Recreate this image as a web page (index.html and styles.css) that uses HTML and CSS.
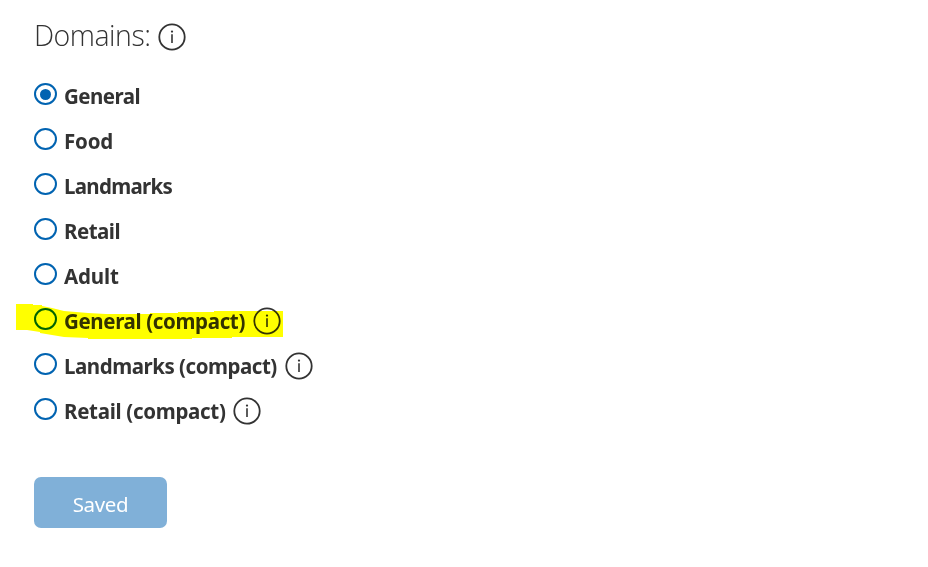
FILE: index.html
```
<!DOCTYPE html>
<html lang="en">
<head>
<meta charset="utf-8">
<title>Domains</title>
<link rel="stylesheet" href="styles.css">
</head>
<body>
<svg width="0" height="0" class="defs"><defs>
<symbol id="info" viewBox="0 0 28 28"><circle cx="14" cy="14" r="12.7" fill="none" stroke="#333" stroke-width="1.8"/><path d="M14 11.3V20" stroke="#333" stroke-width="1.6"/><circle cx="14" cy="8.6" r="1.15" fill="#333"/></symbol>
</defs></svg>
<main class="settings">
<h1 class="heading"><span class="title">Domains:</span><svg class="info"><use href="#info"/></svg></h1>
<div class="options">
<div class="option"><span class="radio checked"></span><span class="label general">General</span></div>
<div class="option"><span class="radio"></span><span class="label food">Food</span></div>
<div class="option"><span class="radio"></span><span class="label landmarks">Landmarks</span></div>
<div class="option"><span class="radio"></span><span class="label retail">Retail</span></div>
<div class="option"><span class="radio"></span><span class="label adult">Adult</span></div>
<div class="option"><span class="radio"></span><span class="label general-compact">General (compact)</span><svg class="info"><use href="#info"/></svg>
<svg class="marker" viewBox="0 0 268 36"><path d="M0 0H17V1H26V2L36 4L48 7L72 9L90 10H134V9H162V8H198V7H267V33H216V34H176V35H72V34L48 33L36 31L24 29V28L11 26H0Z" fill="#ff0"/></svg></div>
<div class="option"><span class="radio"></span><span class="label landmarks-compact">Landmarks (compact)</span><svg class="info"><use href="#info"/></svg></div>
<div class="option"><span class="radio"></span><span class="label retail-compact">Retail (compact)</span><svg class="info"><use href="#info"/></svg></div>
</div>
<button class="save">Saved</button>
</main>
</body>
</html>
```
FILE: styles.css
```
* { box-sizing: border-box; }
body { margin: 0; background: #fff; color: #333; font-family: "Noto Sans", "Open Sans", sans-serif; }
.defs { position: absolute; }
.settings { padding: 15px 34px 0; }
.heading { display: flex; align-items: center; height: 44px; margin: 0; font-weight: 300; font-size: 28.5px; line-height: 44px; }
.title { width: 124px; margin-top: -4px; font-family: "Open Sans", sans-serif; font-weight: 300; white-space: nowrap; letter-spacing: -0.5px; }
.info { display: block; width: 28px; height: 28px; flex: none; }
.option .info { margin-top: -1px; }
.options { padding-top: 15px; }
.option { position: relative; display: flex; align-items: center; height: 45px; }
.radio { display: flex; flex: none; align-items: center; justify-content: center; width: 23px; height: 22px; margin: -5px 7px 0 0; border: 2px solid #0063b1; border-radius: 50%; }
.checked::after { content: ""; width: 11px; height: 11px; border-radius: 50%; background: #0063b1; }
.label { flex: none; margin-top: -2px; font-size: 20.5px; font-weight: 700; line-height: 30px; white-space: nowrap; }
.general { letter-spacing: -0.55px; }
.food { letter-spacing: -0.2px; }
.landmarks { letter-spacing: -0.7px; }
.retail { letter-spacing: -0.5px; }
.adult { letter-spacing: -0.15px; }
.general-compact { width: 189px; letter-spacing: -0.36px; }
.landmarks-compact { width: 220.5px; letter-spacing: -0.47px; }
.retail-compact { width: 169px; letter-spacing: -0.3px; }
.marker { position: absolute; left: -18px; top: 5px; width: 268px; height: 36px; mix-blend-mode: multiply; }
.save { display: block; width: 133px; height: 51px; margin: 43px 0 0; padding: 3px 0 0; border: 0; border-radius: 7px; background: #80b0d8; color: #fff; font: 400 20.5px/30px "Noto Sans", "Open Sans", sans-serif; letter-spacing: -0.35px; }
```
